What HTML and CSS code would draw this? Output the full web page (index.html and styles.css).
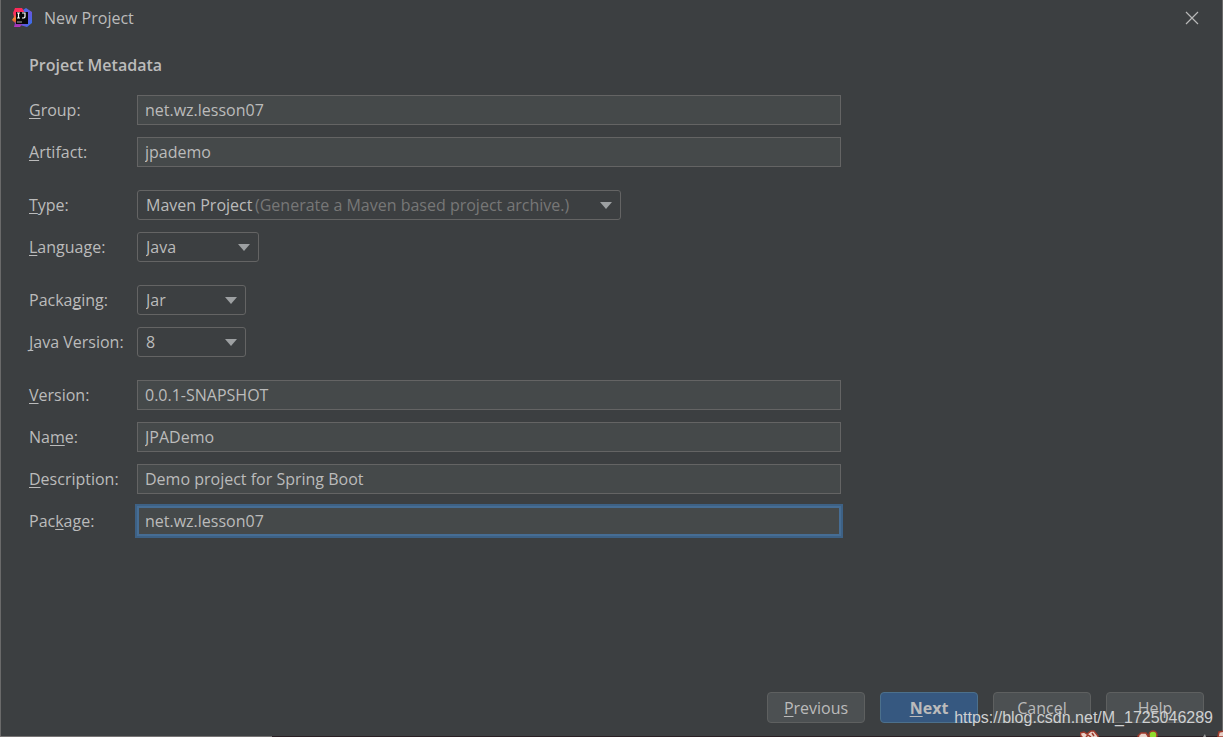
FILE: index.html
```html
<!DOCTYPE html>
<html lang="en">
<head>
<meta charset="utf-8">
<title>New Project</title>
<link rel="stylesheet" href="styles.css">
</head>
<body>
<main class="dialog">
  <header class="titlebar">
    <svg class="logo" viewBox="0 0 20 20" aria-hidden="true">
      <defs>
        <linearGradient id="warm" x1="0" y1="0" x2="0" y2="1"><stop offset="0" stop-color="#fe2857"/><stop offset=".35" stop-color="#f8325f"/><stop offset=".55" stop-color="#f68a2e"/><stop offset=".7" stop-color="#e0602e"/><stop offset=".8" stop-color="#8a3bb0"/><stop offset="1" stop-color="#b531c0"/></linearGradient>
        <linearGradient id="cool" x1="0" y1="0" x2="1" y2="1"><stop offset="0" stop-color="#2b7df5"/><stop offset=".55" stop-color="#6a55dc"/><stop offset="1" stop-color="#2878f0"/></linearGradient>
      </defs>
      <path d="M11 2l3-2 6 4v11l-5 4-7-2z" fill="url(#cool)"/>
      <path d="M3 0h7l3 5-3 11-2 3-6 0 1-4-3-3 2-3-1-4z" fill="url(#warm)"/>
      <path d="M4 4h12v12H4z" fill="#080808"/>
      <path d="M5 5h3M6.500 5v5M5 10h3M10 5h3v4l-1 1h-2" fill="none" stroke="#fff" stroke-width="1.2"/>
      <path d="M5 14h5" stroke="#aaa"/>
    </svg>
    <h1 class="title">New Project</h1>
    <button class="close" type="button" aria-label="Close">
      <svg viewBox="0 0 12 12" aria-hidden="true"><path d="M0 0l12 12M12 0L0 12"/></svg>
    </button>
  </header>

  <form class="form">
    <h2 class="heading">Project Metadata</h2>
    <div class="group">
      <div class="row"><label for="group"><u>G</u>roup:</label><input class="text" id="group" value="net.wz.lesson07"></div>
      <div class="row"><label for="artifact"><u>A</u>rtifact:</label><input class="text" id="artifact" value="jpademo"></div>
    </div>
    <div class="group">
      <div class="row"><label for="type"><u>T</u>ype:</label>
        <div class="combo combo-wide"><select id="type"><option>Maven Project</option></select><span class="hint">(Generate a Maven based project archive.)</span></div>
      </div>
      <div class="row"><label for="language"><u>L</u>anguage:</label>
        <div class="combo combo-medium"><select id="language"><option>Java</option></select></div>
      </div>
    </div>
    <div class="group">
      <div class="row"><label for="packaging">Packa<u>g</u>ing:</label>
        <div class="combo combo-small"><select id="packaging"><option>Jar</option></select></div>
      </div>
      <div class="row"><label for="java"><u>J</u>ava Version:</label>
        <div class="combo combo-small"><select id="java"><option>8</option></select></div>
      </div>
    </div>
    <div class="group">
      <div class="row"><label for="version"><u>V</u>ersion:</label><input class="text" id="version" value="0.0.1-SNAPSHOT"></div>
      <div class="row"><label for="name">Na<u>m</u>e:</label><input class="text" id="name" value="JPADemo"></div>
      <div class="row"><label for="description"><u>D</u>escription:</label><input class="text" id="description" value="Demo project for Spring Boot"></div>
      <div class="row"><label for="package">Pac<u>k</u>age:</label><input class="text text-active" id="package" value="net.wz.lesson07"></div>
    </div>
  </form>

  <footer class="actions">
    <button class="button" type="button"><span><u>P</u>revious</span></button>
    <button class="button button-primary" type="button"><span><u>N</u>ext</span></button>
    <button class="button" type="button"><span>Cancel</span></button>
    <button class="button" type="button"><span>Help</span></button>
  </footer>
</main>
<div class="edge"></div>
<svg class="doodles" viewBox="0 0 143 7" aria-hidden="true">
  <g fill="#e8cfc6" stroke="#9e3a2b" stroke-width="1.5">
    <path d="M1 6l-1-3 4-1 3 2 4-3 3 0 4 5v3H4z"/>
    <path d="M6 7l2-2 3 2M12 3l2 3" fill="none"/>
    <path d="M58 6l3-3h5l2 3v3h-8z"/>
    <path d="M138 7l1-5 5-1v6z"/>
  </g>
  <circle cx="73" cy="5" r="4" fill="#8fdc2c" stroke="#9e3a2b" stroke-width="1.5"/>
  <path d="M123 7l2-3 1 3" fill="#999"/>
</svg>
<div class="watermark">https://blog.csdn.net/M_1725046289</div>
</body>
</html>
```
FILE: styles.css
```css
* { box-sizing: border-box; }

body {
  margin: 0;
  min-height: 100vh;
  display: flex;
  flex-direction: column;
  position: relative;
  overflow: hidden;
  background: #3c3f41;
  color: #bbbbbb;
  font: 16px/22px "Open Sans", "Noto Sans", sans-serif;
}

h1, h2 { margin: 0; font-size: 16px; }
u { text-underline-offset: 2px; text-decoration-thickness: 1px; text-decoration-skip-ink: none; }
input, select, button { font: inherit; color: inherit; margin: 0; }

.dialog {
  flex: 1;
  display: flex;
  flex-direction: column;
  border: solid #6a6a6a;
  border-width: 0 1px;
}

.titlebar {
  display: flex;
  align-items: center;
  gap: 12px;
  height: 36px;
  padding: 0 24px 0 11px;
}
.logo { width: 20px; height: 20px; }
.title { flex: 1; font-weight: 400; }
.close { display: flex; padding: 0; border: 0; background: none; }
.close svg { width: 12px; height: 12px; overflow: visible; }
.close path { fill: none; stroke: #b8b8b8; stroke-width: 1.2; }

.form { flex: 1; padding: 18px 28px 0; }
.heading { font-weight: 600; margin-bottom: 19px; }

.group { display: grid; gap: 12px; margin-bottom: 23px; }
.row {
  display: grid;
  grid-template-columns: 108px minmax(0, 60.4%);
  align-items: center;
  height: 30px;
}

.text {
  width: 100%;
  height: 30px;
  padding: 0 7px;
  border: 1px solid #646464;
  border-radius: 0;
  background: #45494a;
  outline: none;
}
.text-active { border-color: #466d94; box-shadow: 0 0 0 2px #3d6185, inset 0 0 0 1px #466d94; }

.combo { position: relative; }
.combo-wide { width: 484px; }
.combo-medium { width: 122px; }
.combo-small { width: 109px; }
.combo select {
  display: block;
  width: 100%;
  height: 30px;
  padding: 0 26px 0 8px;
  border: 1px solid #646464;
  border-radius: 3px;
  background: #3c3f41;
  appearance: none;
  outline: none;
}
.combo::after {
  content: "";
  position: absolute;
  right: 9px;
  top: 12px;
  border: solid transparent;
  border-width: 7px 6px 0;
  border-top-color: #9da0a2;
  pointer-events: none;
}
.hint { position: absolute; left: 118px; top: 4px; color: #777777; pointer-events: none; white-space: nowrap; }

.actions { display: flex; justify-content: flex-end; gap: 15px; padding: 0 18px 14px; }
.button {
  width: 98px;
  height: 31px;
  padding: 0;
  border: 1px solid #5e6060;
  border-radius: 4px;
  background: #4c5052;
}
.button-primary { border-color: #4c708c; background: #365880; font-weight: 700; }

.edge { position: absolute; left: 0; right: 0; bottom: 0; height: 1px; background: linear-gradient(90deg, #777474 22.2%, #2b2024 22.2%); }
.doodles { position: absolute; right: 0; bottom: 0; width: 143px; height: 7px; }
.watermark {
  position: absolute;
  right: 10px;
  bottom: 8px;
  color: #cfd0d1;
  font: 16px/22px "Liberation Sans", Arial, sans-serif;
}
```
